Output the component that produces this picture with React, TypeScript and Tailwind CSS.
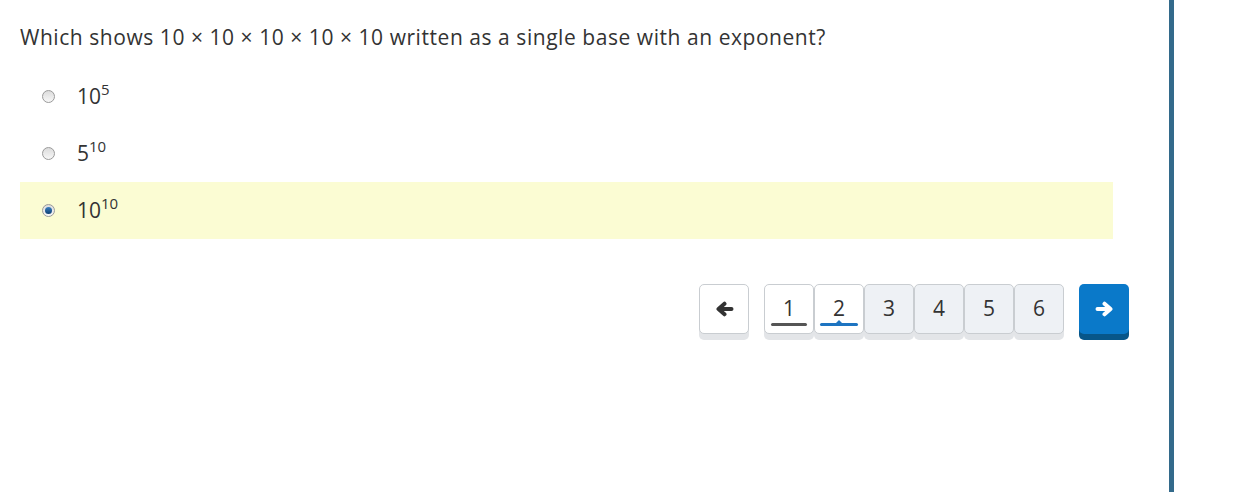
const options = [
  { base: "10", exp: "5", checked: false },
  { base: "5", exp: "10", checked: false },
  { base: "10", exp: "10", checked: true },
];

function Radio({ checked }: { checked: boolean }) {
  return (
    <span className="flex h-[13px] w-[13px] items-center justify-center rounded-full border border-[#9a9a9a] bg-gradient-to-b from-[#dcdcdc] to-[#f7f7f7]">
      {checked && <span className="h-[7px] w-[7px] rounded-full bg-gradient-to-b from-[#3a7fc0] to-[#0d3f73]" />}
    </span>
  );
}

function Arrow({ dir }: { dir: "left" | "right" }) {
  return (
    <svg width="19" height="16" viewBox="0 0 19 16" className={dir === "right" ? "rotate-180" : ""}>
      <path d="M16.5 8H4.5 M9.5 2.7 3.5 8l6 5.3" fill="none" stroke="currentColor" strokeWidth="4" strokeLinecap="round" strokeLinejoin="round" />
    </svg>
  );
}

export default function App() {
  return (
    <div className="flex h-[492px] w-[1241px] bg-white text-[#333]" style={{ fontFamily: '"Open Sans", "Noto Sans", sans-serif' }}>
      <div className="w-[1169px] pl-5 pr-[56px] pt-[22px]">
        <p className="text-[21px] leading-[30px] tracking-[0.55px]">
          Which shows 10 × 10 × 10 × 10 × 10 written as a single base with an exponent?
        </p>

        <div className="mt-[16px] flex flex-col">
          {options.map((o, i) => (
            <div
              key={i}
              className={`flex h-[57px] items-center gap-[22px] pl-[22px] ${o.checked ? "bg-[#fbfcd3]" : ""}`}
            >
              <Radio checked={o.checked} />
              <span className="text-[21px] leading-none">
                {o.base}
                <sup className="-top-[9px] text-[15px]">{o.exp}</sup>
              </span>
            </div>
          ))}
        </div>

        <div className="-mr-[16px] mt-[45px] flex justify-end">
          <button className="flex h-[50px] w-[50px] items-center justify-center rounded-[5px] border border-[#c9cdd1] bg-white text-[#333] shadow-[0_6px_0_#e3e5e8]">
            <Arrow dir="left" />
          </button>

          <div className="ml-[15px] flex">
            {[1, 2, 3, 4, 5, 6].map((n) => (
              <button
                key={n}
                className={`relative flex h-[50px] w-[50px] items-center justify-center rounded-[5px] border border-[#c9cdd1] text-[21px] font-medium shadow-[0_6px_0_#e3e5e8] ${n <= 2 ? "bg-white" : "bg-[#eef1f5]"}`}
              >
                {n}
                {n === 1 && <span className="absolute bottom-[7px] left-[6px] right-[6px] h-[3px] rounded-full bg-[#555]" />}
                {n === 2 && (
                  <>
                    <span className="absolute bottom-[7px] left-[5px] right-[5px] h-[3px] rounded-full bg-[#1d74c1]" />
                    <span className="absolute bottom-[9px] left-1/2 h-0 w-0 -translate-x-1/2 border-x-[4px] border-b-[4px] border-x-transparent border-b-[#1d74c1]" />
                  </>
                )}
              </button>
            ))}
          </div>

          <button className="ml-[15px] flex h-[50px] w-[50px] items-center justify-center rounded-[5px] bg-[#0a79c9] text-white shadow-[0_6px_0_#075689]">
            <Arrow dir="right" />
          </button>
        </div>
      </div>
      <div className="w-[5px] bg-[#336a8b]" />
    </div>
  );
}
